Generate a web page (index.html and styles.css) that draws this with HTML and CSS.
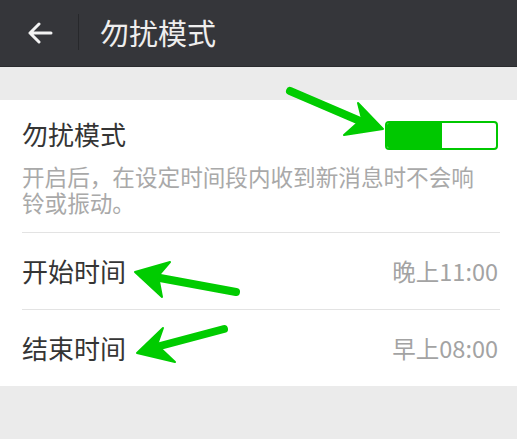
FILE: index.html
```html
<!DOCTYPE html>
<html lang="zh-CN">
<head>
<meta charset="utf-8">
<link rel="stylesheet" href="styles.css">
</head>
<body>
<div class="page">
  <header class="bar">
    <span class="back">
      <svg width="26" height="22" viewBox="0 0 26 22"><path d="M24 11H3M12 2L3 11l9 9" fill="none" stroke="#f2f2f2" stroke-width="3" stroke-linecap="round" stroke-linejoin="round"/></svg>
    </span>
    <span class="divider"></span>
    <span class="title">勿扰模式</span>
  </header>
  <div class="gap"></div>
  <section class="card">
    <div class="mode">
      <div class="mode-head">
        <span class="label">勿扰模式</span>
        <span class="toggle"><span class="on"></span></span>
      </div>
      <p class="desc">开启后，在设定时间段内收到新消息时不会响铃或振动。</p>
    </div>
    <div class="row"><span class="label">开始时间</span><span class="value">晚上11:00</span></div>
    <div class="row last"><span class="label">结束时间</span><span class="value">早上08:00</span></div>
  </section>
  <svg class="marks" width="517" height="439" viewBox="0 0 517 439">
    <g fill="#00cc00" stroke="#00cc00" stroke-linejoin="round" stroke-linecap="round">
      <line x1="290" y1="91" x2="360" y2="121" stroke-width="8"/>
      <polygon points="383,129 358,103 362,119 344,135" stroke-width="2"/>
      <line x1="236" y1="292" x2="160" y2="278" stroke-width="8"/>
      <polygon points="135,272 170,262 158,276 162,297" stroke-width="2"/>
      <line x1="224" y1="329" x2="160" y2="346" stroke-width="8"/>
      <polygon points="137,353 163,328 157,345 175,362" stroke-width="2"/>
    </g>
  </svg>
</div>
</body>
</html>
```
FILE: styles.css
```css
html, body {
  margin: 0;
  padding: 0;
  background: #ebebeb;
}
.page {
  position: relative;
  width: 517px;
  height: 439px;
  overflow: hidden;
  font-family: "Noto Sans CJK SC", "Noto Sans", sans-serif;
}
.bar {
  height: 66px;
  background: #35363a;
  border-bottom: 1px solid #2a2b2e;
  display: flex;
  align-items: center;
}
.back {
  width: 26px;
  height: 22px;
  margin-left: 27px;
  display: flex;
}
.divider {
  width: 1px;
  height: 36px;
  background: #27282b;
  margin-left: 25px;
  margin-right: 21px;
  margin-top: -2px;
}
.title {
  color: #eeeeee;
  font-size: 29px;
  line-height: 30px;
  margin-top: -3px;
}
.gap {
  height: 33px;
}
.card {
  background: #ffffff;
  padding: 0 17px 0 22px;
}
.mode {
  padding: 19px 0 16px;
  border-bottom: 1px solid #e3e3e3;
}
.mode-head {
  display: flex;
  justify-content: space-between;
  align-items: center;
  height: 30px;
}
.label {
  font-size: 26px;
  color: #353535;
  line-height: 30px;
}
.toggle {
  width: 109px;
  height: 25px;
  border: 2px solid #00c800;
  border-radius: 4px;
  display: flex;
  margin-right: 2px;
  margin-top: 2px;
  background: #fff;
  overflow: hidden;
}
.on {
  width: 55px;
  height: 100%;
  background: #00c800;
}
.desc {
  margin: 15px 0 0;
  font-size: 22.6px;
  line-height: 26px;
  color: #a9a9a9;
  width: 470px;
}
.row {
  height: 76px;
  display: flex;
  justify-content: space-between;
  align-items: center;
  border-bottom: 1px solid #e3e3e3;
}
.row.last {
  border-bottom: none;
}
.value {
  font-size: 23.5px;
  color: #a3a3a3;
  margin-right: 2px;
}
.marks {
  position: absolute;
  left: 0;
  top: 0;
  pointer-events: none;
}
```
